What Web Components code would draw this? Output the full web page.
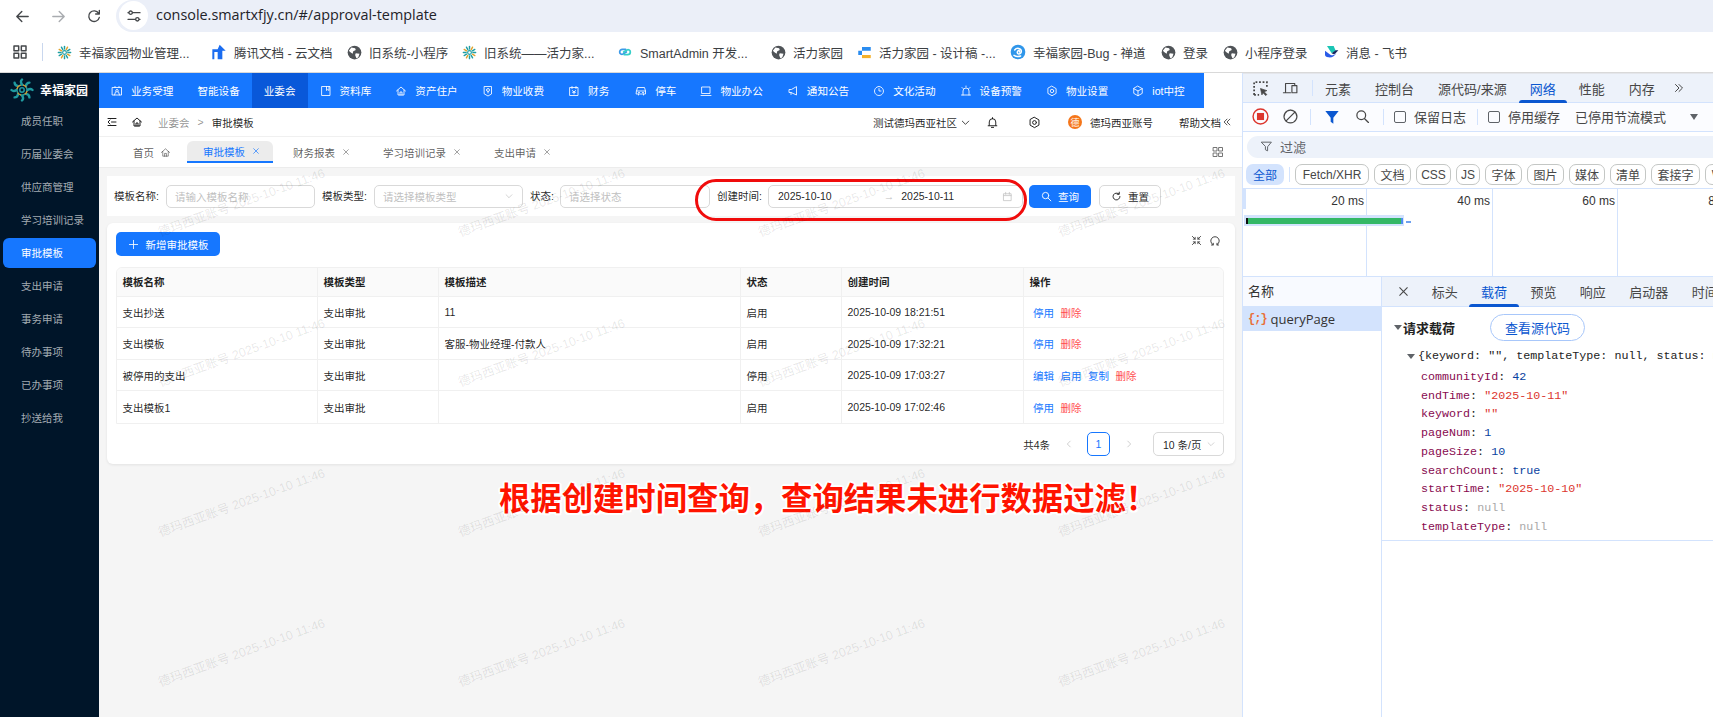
<!DOCTYPE html>
<html lang="zh-CN">
<head>
<meta charset="utf-8">
<title>approval-template</title>
<style>
  html, body { margin: 0; height: 100%; overflow: hidden; background: #fff; }
  body { font-family: "Liberation Sans", "Noto Sans CJK SC", sans-serif; width: 1713px; height: 717px; display: flex; flex-direction: column; }
  #work { flex: 1; display: flex; min-height: 0; }
</style>
</head>
<body>
<browser-bar url="console.smartxfjy.cn/#/approval-template"></browser-bar>
<bookmark-bar>
  <book-mark icon="flake" style="width:154px">幸福家园物业管理...</book-mark>
  <book-mark icon="tdoc" style="width:136px">腾讯文档 - 云文档</book-mark>
  <book-mark icon="globe" style="width:115px">旧系统-小程序</book-mark>
  <book-mark icon="flake" style="width:155px">旧系统——活力家...</book-mark>
  <book-mark icon="chain" style="width:154px">SmartAdmin 开发...</book-mark>
  <book-mark icon="globe" style="width:86px">活力家园</book-mark>
  <book-mark icon="design" style="width:153px">活力家园 - 设计稿 -...</book-mark>
  <book-mark icon="bug" style="width:151px">幸福家园-Bug - 禅道</book-mark>
  <book-mark icon="globe" style="width:62px">登录</book-mark>
  <book-mark icon="globe" style="width:100px">小程序登录</book-mark>
  <book-mark icon="feishu">消息 - 飞书</book-mark>
</bookmark-bar>
<div id="work">
  <app-sidebar>
    <side-item>成员任职</side-item>
    <side-item>历届业委会</side-item>
    <side-item>供应商管理</side-item>
    <side-item>学习培训记录</side-item>
    <side-item active>审批模板</side-item>
    <side-item>支出申请</side-item>
    <side-item>事务申请</side-item>
    <side-item>待办事项</side-item>
    <side-item>已办事项</side-item>
    <side-item>抄送给我</side-item>
  </app-sidebar>
  <app-main>
    <top-nav>
      <nav-item icon="idcard">业务受理</nav-item>
      <nav-item>智能设备</nav-item>
      <nav-item active>业委会</nav-item>
      <nav-item icon="book">资料库</nav-item>
      <nav-item icon="home">资产住户</nav-item>
      <nav-item icon="bill">物业收费</nav-item>
      <nav-item icon="money" style="padding-right:14px">财务</nav-item>
      <nav-item icon="car">停车</nav-item>
      <nav-item icon="laptop">物业办公</nav-item>
      <nav-item icon="horn">通知公告</nav-item>
      <nav-item icon="dial">文化活动</nav-item>
      <nav-item icon="alarm">设备预警</nav-item>
      <nav-item icon="gear">物业设置</nav-item>
      <nav-item icon="cube">iot中控</nav-item>
    </top-nav>
    <bread-bar></bread-bar>
    <tab-strip></tab-strip>
    <page-content>
      <filter-card></filter-card>
      <table-card></table-card>
      <call-out>根据创建时间查询，查询结果未进行数据过滤！</call-out>
      <water-mark text="德玛西亚账号 2025-10-10 11:46"></water-mark>
    </page-content>
  </app-main>
  <dev-tools></dev-tools>
</div>

<script>
const ICONS = {
  back: "M20 12H5M11 5l-7 7 7 7",
  forward: "M4 12h15M13 5l7 7-7 7",
  reload: "M19 8a8 8 0 1 0 1 6M20 3.5V9h-5.5",
  tune: "M3 7h1M10 7h11M3 17h11M20 17h1M9.5 7a2.5 2.5 0 1 1-5 0a2.5 2.5 0 1 1 5 0M19.5 17a2.5 2.5 0 1 1-5 0a2.5 2.5 0 1 1 5 0",
  grid: "M3 3h7v7H3zM14 3h7v7h-7zM3 14h7v7H3zM14 14h7v7h-7z",
  home: "M3 12l9-8 9 8M6 10v10h12V10M10 20v-6h4v6",
  menu: "M4 5h16M11 12h9M4 19h16M8 8l-4 4 4 4",
  close: "M5 5l14 14M19 5L5 19",
  chevron: "M5 9l7 7 7-7",
  left: "M15 5l-7 7 7 7",
  right: "M9 5l7 7-7 7",
  bell: "M6 17v-6a6 6 0 0 1 12 0v6M4 18h16M10 21h4M12 3v2",
  gear: "M12 2.5l8.2 4.7v9.6L12 21.5l-8.2-4.7V7.2zM15.5 12a3.5 3.5 0 1 1-7 0a3.5 3.5 0 1 1 7 0",
  search: "M15.5 15.5l6 6M17 10a7 7 0 1 1-14 0a7 7 0 1 1 14 0",
  reset: "M19.5 12a7.5 7.5 0 1 1-2.3-5.4M18 2.500V7h-4.5",
  calendar: "M4 6h16v15H4zM4 10h16M8 3v4M16 3v4",
  plus: "M12 3v18M3 12h18",
  expand: "M3 3l6 6M3 21l6-6M21 3l-6 6M21 21l-6-6M9 5v4H5M15 5v4h4M9 19v-4H5M15 19v-4h4",
  refresh: "M8 19.5a8.5 8.5 0 1 1 8 0M5 20h3.500v-3.500M19 20h-3v-3.500",
  dleft: "M12 5l-7 7 7 7M19 5l-7 7 7 7",
  dright: "M5 5l7 7-7 7M12 5l7 7-7 7",
  idcard: "M3 5h18v15H3zM8 5V3M16 5V3M12 9a2.500 2.500 0 1 1 0 5a2.500 2.500 0 1 1 0-5M7 20l2-6M17 20l-2-6",
  book: "M4 3h16v18H4zM13 3v8l2.500-2 2.500 2V3",
  bill: "M5 3h14v15l-7 4-7-4zM9 10a3 3 0 1 0 6 0a3 3 0 1 0-6 0M12 13v3",
  money: "M4 5h16v16H4zM8 3v4M16 3v4M9 11l3 3 3-3M12 14v4M9 14.500h6",
  car: "M3 12l2-7h14l2 7v6H3zM3 12h18M7 18v2M17 18v2M7 15h2M15 15h2",
  laptop: "M4 4h16v13H4zM2 21h20",
  horn: "M19 4v16L8 15H4V9h4zM8 15v4",
  dial: "M12 3a9 9 0 1 1-.1 0M12 7v5h4",
  alarm: "M6 20V12a6 6 0 0 1 12 0v8M3 20h18M4 5l2 2M20 5l-2 2M12 2v2",
  cube: "M12 2.500l8.500 4.800v9.400L12 21.500l-8.500-4.800V7.300zM3.500 7.300L12 12l8.500-4.700M12 12v9.500",
  funnel: "M3 4h18l-7 8.500V20l-4-2v-5.500z",
  device: "M5 17V5h13v2M2 18h10M14 8h7v10h-7z",
  ban: "M12 3a9 9 0 1 1-.1 0M5.500 18.500l13-13"
};

// each file-level helper returns a plain svg string so shadow markup stays short
function svg(name, size, width, extra) {
  return `<svg width="${size}" height="${size}" viewBox="0 0 24 24" fill="none" stroke="currentColor" stroke-width="${width || 2}" stroke-linecap="round" stroke-linejoin="round" style="display:block;flex:none;${extra || ""}"><path d="${ICONS[name]}"/></svg>`;
}

function flake(size) {
  let rays = "";
  for (let i = 0; i < 12; i++) {
    const color = i % 3 === 1 ? "#e0a22c" : "#1e9ea3";
    rays += `<path d="M12 6.500V2.200" stroke="${color}" stroke-width="2.300" stroke-linecap="round" transform="rotate(${i * 30} 12 12)"/>`;
  }
  return `<svg width="${size}" height="${size}" viewBox="0 0 24 24" fill="none" style="display:block;flex:none">${rays}<circle cx="12" cy="12" r="3" stroke="#1e9ea3" stroke-width="1.800"/></svg>`;
}

function logo(size) {
  let arcs = "";
  for (let i = 0; i < 8; i++) {
    arcs += `<g transform="rotate(${i * 45} 12 12)"><path d="M12 1.500c-1.500 1.500-1.500 3 0 5" stroke="#1f9aa0" stroke-width="2.400" stroke-linecap="round"/><path d="M9.500 7.500c1.500-1 3-1 4.500 0" stroke="${i % 2 ? "#d99a2b" : "#1f9aa0"}" stroke-width="1.300" stroke-linecap="round"/></g>`;
  }
  return `<svg width="${size}" height="${size}" viewBox="0 0 24 24" fill="none" style="display:block;flex:none">${arcs}<circle cx="12" cy="12" r="2.200" stroke="#1f9aa0" stroke-width="1.500"/></svg>`;
}

const FAVICONS = {
  flake: () => flake(15),
  globe: () => `<svg width="15" height="15" viewBox="0 0 24 24" style="display:block;flex:none"><circle cx="12" cy="12" r="11" fill="#4f5357"/><path d="M7 4l6 1 1 3-4 2-1 4-4-3-2-2zM14 13l6 1-2 6-3 1-2-5z" fill="#fff"/></svg>`,
  tdoc: () => `<svg width="16" height="16" viewBox="0 0 24 24" style="display:block;flex:none"><path d="M13 1l9 9h-5v13h-7V12H5v11H2V8h8z" fill="#1a6cf0"/></svg>`,
  chain: () => `<svg width="16" height="16" viewBox="0 0 24 24" fill="none" stroke-width="2.600" stroke-linecap="round" style="display:block;flex:none"><path d="M13 8H8a4 4 0 0 0-4 4c0 3 3 4 5 3l5-3" stroke="#3c9ae8"/><path d="M11 16h5a4 4 0 0 0 4-4c0-3-3-4-5-3l-5 3" stroke="#36cfc9"/></svg>`,
  design: () => `<svg width="15" height="15" viewBox="0 0 24 24" style="display:block;flex:none"><path d="M8 3h14v6H8zM2 9h6v7H2z" fill="#2a8cf0"/><path d="M8 16h14v5H8z" fill="#f5b12a"/></svg>`,
  bug: () => `<svg width="16" height="16" viewBox="0 0 24 24" fill="none" style="display:block;flex:none"><circle cx="12" cy="12" r="11" fill="#2f96ea"/><path d="M7 9c3-4 10-3 10 2s-7 5-6 1 4-2 3 0M6 17c3 2 7 2 10 1" stroke="#fff" stroke-width="2.200" stroke-linecap="round"/></svg>`,
  feishu: () => `<svg width="16" height="16" viewBox="0 0 24 24" style="display:block;flex:none"><path d="M6 3h10l3 7-6 4z" fill="#1ac5b4"/><path d="M3 10l8 6c4 2 7 0 9-3-2 5-7 8-12 7-3-.5-5-2-5-4z" fill="#2a5be8"/><path d="M13 14l5-4c1-.7 3-.8 5-.2-2 .8-3 4-5 5-2 .8-3.500 .4-5-.8z" fill="#16245e"/></svg>`
};

// small base class: set the shadow markup once
class Base extends HTMLElement {
  connectedCallback() {
    if (!this.shadowRoot) {
      this.attachShadow({ mode: "open" }).innerHTML = this.render();
    }
  }
}

class BrowserBar extends Base {
  render() {
    return `<style>
      :host { display: flex; align-items: center; height: 32px; flex: none; color: #44474a; }
      .btn { width: 36px; display: flex; justify-content: center; }
      .nav { display: flex; padding-left: 4px; width: 116px; box-sizing: border-box; }
      .pill { flex: 1; height: 32px; margin-top: -1px; background: #ebeff8; border-radius: 16px 0 0 16px; display: flex; align-items: center; padding-left: 3px; }
      .tune { width: 29px; height: 29px; border-radius: 50%; background: #fff; display: flex; align-items: center; justify-content: center; }
      .url { margin: 0 0 2px 8px; font: 14.4px "Open Sans", sans-serif; color: #1f2329; }
    </style>
    <div class="nav">
      <div class="btn">${svg("back", 17)}</div>
      <div class="btn" style="color:#a9acb0">${svg("forward", 17)}</div>
      <div class="btn">${svg("reload", 16)}</div>
    </div>
    <div class="pill">
      <div class="tune">${svg("tune", 16)}</div>
      <div class="url">${this.getAttribute("url")}</div>
    </div>`;
  }
}

class BookmarkBar extends Base {
  render() {
    return `<style>
      :host { display: flex; align-items: center; height: 41px; box-sizing: border-box; border-bottom: 1px solid #d9d9d9; flex: none; padding-left: 12px; color: #44474a; }
      .sep { width: 1px; height: 18px; background: #c9d7ee; margin: 0 14px 0 14px; }
    </style>
    ${svg("grid", 16, 2.2)}
    <div class="sep"></div>
    <slot></slot>`;
  }
}

class BookMark extends Base {
  render() {
    return `<style>
      :host { display: flex; align-items: center; gap: 7px; flex: none; font-size: 12.5px; color: #3c4043; white-space: nowrap; box-sizing: border-box; }
    </style>
    ${FAVICONS[this.getAttribute("icon")]()}<slot></slot>`;
  }
}

class AppSidebar extends Base {
  render() {
    return `<style>
      :host { display: block; width: 99px; flex: none; background: #001529; }
      .logo { height: 33px; display: flex; align-items: center; padding-left: 10px; gap: 6px; color: #fff; font-size: 12px; font-weight: 700; white-space: nowrap; }
    </style>
    <div class="logo">${logo(24)}<span>幸福家园</span></div>
    <slot></slot>`;
  }
}

class SideItem extends Base {
  render() {
    const active = this.hasAttribute("active");
    return `<style>
      :host { display: flex; align-items: center; height: 30px; box-sizing: border-box; padding: 0 0 2px 18px; margin: 0 3px 3px; border-radius: 6px; font-size: 10.5px; white-space: nowrap;
        color: ${active ? "#fff" : "rgba(255,255,255,.65)"}; background: ${active ? "#1677ff" : "none"}; }
    </style><slot></slot>`;
  }
}

class AppMain extends Base {
  render() {
    return `<style>
      :host { display: flex; flex-direction: column; width: 1143px; flex: none; background: #f5f5f5; min-height: 0; }
    </style><slot></slot>`;
  }
}

class TopNav extends Base {
  render() {
    return `<style>
      :host { display: flex; height: 35px; flex: none; background: #fff; }
      .blue { display: flex; background: #1677ff; width: 1105px; }
    </style><div class="blue"><slot></slot></div>`;
  }
}

class NavItem extends Base {
  render() {
    const icon = this.getAttribute("icon");
    return `<style>
      :host { display: flex; align-items: center; gap: 8px; padding: 0 12px; flex: none; font-size: 10.6px; color: #fff; white-space: nowrap;
        background: ${this.hasAttribute("active") ? "#0958d9" : "none"}; }
    </style>${icon ? svg(icon, 12, 1.7) : ""}<slot></slot>`;
  }
}

class BreadBar extends Base {
  render() {
    return `<style>
      :host { display: flex; align-items: center; height: 29px; flex: none; box-sizing: border-box; background: #fff; border-bottom: 1px solid #f0f0f0; font-size: 10.5px; color: rgba(0,0,0,.88); white-space: nowrap; }
      .left { display: flex; align-items: center; padding-left: 7px; flex: 1; }
      .muted { color: rgba(0,0,0,.45); }
      .sep { color: rgba(0,0,0,.45); margin: 0 8px; }
      .right { display: flex; align-items: center; }
      .avatar { width: 14px; height: 14px; border-radius: 50%; background: #f5761a; color: #fff; font-size: 9px; display: flex; align-items: center; justify-content: center; }
    </style>
    <div class="left">
      ${svg("menu", 12, 2)}
      <span style="width:13px"></span>${svg("home", 12, 2)}
      <span style="width:15px"></span><span class="muted">业委会</span><span class="sep">&gt;</span><span>审批模板</span>
    </div>
    <div class="right">
      <span>测试德玛西亚社区</span>
      ${svg("chevron", 11, 1.8, "margin:0 15px 0 3px")}
      ${svg("bell", 13, 1.8, "margin-right:29px")}
      ${svg("gear", 13, 1.8, "margin-right:27px")}
      <span class="avatar">德</span>
      <span style="margin:0 26px 0 8px">德玛西亚账号</span>
      <span>帮助文档</span>
      ${svg("dleft", 10, 1.8, "margin:0 10px 0 1px")}
    </div>`;
  }
}

class TabStrip extends Base {
  render() {
    const tabs = ["财务报表", "学习培训记录", "支出申请"];
    return `<style>
      :host { display: flex; align-items: center; height: 31px; flex: none; box-sizing: border-box; background: #fff; border-bottom: 1px solid #ececec; font-size: 10.5px; color: rgba(0,0,0,.88); white-space: nowrap; padding-left: 34px; }
      .tab { display: flex; align-items: center; gap: 6px; color: rgba(0,0,0,.65); }
      .tab svg { color: rgba(0,0,0,.55); }
      .on { height: 22px; box-sizing: border-box; margin: 0 20px 0 16px; padding: 0 16px; width: 86px; gap: 7px; background: #ececec; border-radius: 6px 6px 0 0; border-bottom: 2px solid #1677ff; color: #1677ff; }
      .on svg { color: #1677ff; }
      .gap { margin-right: 33px; gap: 7px; }
      .end { margin-left: auto; margin-right: 18px; color: #666; }
    </style>
    <div class="tab" style="gap:6px">首页 ${svg("home", 11, 1.7)}</div>
    <div class="tab on">审批模板 ${svg("close", 8, 2)}</div>
    ${tabs.map(t => `<div class="tab gap">${t} ${svg("close", 8, 2)}</div>`).join("")}
    <div class="end">${svg("grid", 12, 1.8)}</div>`;
  }
}

class PageContent extends Base {
  render() {
    return `<style>
      :host { display: block; position: relative; flex: 1; min-height: 0; padding: 8px 7px 0 8px; }
    </style><slot></slot>`;
  }
}

class FilterCard extends Base {
  render() {
    return `<style>
      :host { display: flex; align-items: center; position: relative; z-index: 2; height: 40px; box-sizing: border-box; background: #fff; padding-left: 7px; font-size: 10.5px; color: rgba(0,0,0,.88); white-space: nowrap; }
      .lab { width: 46px; margin-right: 6px; flex: none; padding-bottom: 1px; }
      .box { height: 23px; box-sizing: border-box; border: 1px solid #d9d9d9; border-radius: 5px; display: flex; align-items: center; padding: 0 8px; color: #bfbfbf; flex: none; margin-right: 7px; }
      .box svg { margin-left: auto; color: #bfbfbf; }
      .date { color: rgba(0,0,0,.88); padding: 0 9px; margin-right: 6px; }
      .btn { width: 62px; height: 23px; box-sizing: border-box; border-radius: 5px; display: flex; align-items: center; justify-content: center; gap: 6px; flex: none; }
      .pri { background: #1677ff; color: #fff; margin-right: 8px; }
      .def { border: 1px solid #d9d9d9; }
      .ring { position: absolute; left: 588px; top: 3px; width: 332px; height: 42px; box-sizing: border-box; border: 3px solid #f00c0c; border-radius: 21px; }
    </style>
    <span class="lab">模板名称:</span>
    <div class="box" style="width:149px">请输入模板名称</div>
    <span class="lab">模板类型:</span>
    <div class="box" style="width:149px">请选择模板类型${svg("chevron", 10, 1.6)}</div>
    <span class="lab" style="width:22px;margin-right:8px">状态:</span>
    <div class="box" style="width:150px">请选择状态</div>
    <span class="lab" style="width:45px">创建时间:</span>
    <div class="box date" style="width:255px"><span>2025-10-10</span><span style="margin:0 7px 0 52px;color:#bfbfbf">→</span><span>2025-10-11</span>${svg("calendar", 11, 1.6, "margin-right:0")}</div>
    <div class="btn pri">${svg("search", 11, 2)}查询</div>
    <div class="btn def">${svg("reset", 11, 2)}重置</div>
    <div class="ring"></div>`;
  }
}

class TableCard extends Base {
  render() {
    const rows = [
      ["支出抄送", "支出审批", "11", "启用", "2025-10-09 18:21:51", ["停用", "删除"], 31],
      ["支出模板", "支出审批", "客服-物业经理-付款人", "启用", "2025-10-09 17:32:21", ["停用", "删除"], 32],
      ["被停用的支出", "支出审批", "", "停用", "2025-10-09 17:03:27", ["编辑", "启用", "复制", "删除"], 31],
      ["支出模板1", "支出审批", "", "启用", "2025-10-09 17:02:46", ["停用", "删除"], 32]
    ];
    const body = rows.map(r => `<tr style="height:${r[6]}px">
      ${r.slice(0, 5).map(c => `<td>${c}</td>`).join("")}
      <td class="ops">${r[5].map(a => `<a class="${a === "删除" ? "del" : ""}">${a}</a>`).join("")}</td></tr>`).join("");
    return `<style>
      :host { display: block; margin-top: 7px; height: 241px; box-sizing: border-box; background: #fff; border-radius: 6px; box-shadow: 0 1px 3px rgba(0,0,0,.08); padding: 9px 10px 0 9px; font-size: 10.5px; color: rgba(0,0,0,.88); white-space: nowrap; }
      .top { display: flex; align-items: center; height: 24px; margin-bottom: 11px; }
      .add { width: 104px; height: 24px; background: #1677ff; color: #fff; border-radius: 5px; display: flex; align-items: center; justify-content: center; gap: 7px; }
      .tools { margin-left: auto; display: flex; gap: 7px; margin-right: 4px; margin-top: -6px; color: #444; }
      table { width: 1108px; table-layout: fixed; border-collapse: separate; border-spacing: 0; border: 1px solid #f0f0f0; border-radius: 6px 6px 0 0; }
      th, td { text-align: left; padding: 0 5.5px; border-bottom: 1px solid #f0f0f0; border-right: 1px solid #f0f0f0; font-weight: 400; }
      th { background: #fafafa; font-weight: 700; height: 26px; padding-bottom: 2px; }
      th:first-child { border-top-left-radius: 6px; }
      th:last-child { border-top-right-radius: 6px; }
      th:last-child, td:last-child { border-right: 0; }
      tr:last-child td { border-bottom: 0; }
      .ops { padding-left: 9px; }
      a { color: #1677ff; margin-right: 6.5px; }
      a.del { color: #ff4d4f; }
      .pager { display: flex; align-items: center; justify-content: flex-end; height: 24px; margin-top: 8px; width: 1108px; }
      .page { width: 23px; height: 24px; box-sizing: border-box; border: 1px solid #1677ff; border-radius: 5px; color: #1677ff; display: flex; align-items: center; justify-content: center; margin: 0 14px 0 13px; }
      .size { width: 71px; height: 24px; box-sizing: border-box; border: 1px solid #d9d9d9; border-radius: 5px; display: flex; align-items: center; padding: 0 7px 0 9px; justify-content: space-between; margin-left: 19px; }
      .dim { color: #bfbfbf; }
    </style>
    <div class="top">
      <div class="add">${svg("plus", 11, 1.8)}新增审批模板</div>
      <div class="tools">${svg("expand", 11, 2)}${svg("refresh", 12, 2)}</div>
    </div>
    <table>
      <colgroup><col style="width:201px"><col style="width:121px"><col style="width:302px"><col style="width:101px"><col style="width:182px"><col></colgroup>
      <tr><th>模板名称</th><th>模板类型</th><th>模板描述</th><th>状态</th><th>创建时间</th><th>操作</th></tr>
      ${body}
    </table>
    <div class="pager">
      <span style="margin-right:14px">共4条</span>
      <span class="dim">${svg("left", 10, 1.8)}</span>
      <div class="page">1</div>
      <span class="dim">${svg("right", 10, 1.8)}</span>
      <div class="size">10 条/页<span class="dim">${svg("chevron", 10, 1.6)}</span></div>
    </div>`;
  }
}

class CallOut extends Base {
  render() {
    return `<style>
      :host { position: absolute; left: 400px; top: 311px; z-index: 3; white-space: nowrap; font: 700 31.35px/36px "Noto Sans CJK SC", sans-serif; color: #ff1400;
        text-shadow: 2px 0 #fff, -2px 0 #fff, 0 2px #fff, 0 -2px #fff, 1.5px 1.5px #fff, -1.5px 1.5px #fff, 1.5px -1.5px #fff, -1.5px -1.5px #fff; }
    </style><slot></slot>`;
  }
}

class WaterMark extends Base {
  render() {
    const text = this.getAttribute("text");
    return `<style>
      :host { position: absolute; inset: -10px 0 0 0; overflow: hidden; z-index: 4; pointer-events: none; }
      .tiles { display: grid; grid-template-columns: repeat(4, 300px); grid-auto-rows: 150px; margin: -32px 0 0 -8px; }
      .tiles div { display: flex; align-items: center; justify-content: center; }
      span { font: 12.5px "Liberation Sans", "Noto Sans CJK SC", sans-serif; color: rgba(0,0,0,.1); white-space: nowrap; transform: rotate(-20deg); }
    </style>
    <div class="tiles">${`<div><span>${text}</span></div>`.repeat(16)}</div>`;
  }
}

class DevTools extends Base {
  render() {
    const chips = [["Fetch/XHR", 74], ["文档", 37], ["CSS", 35], ["JS", 24], ["字体", 37], ["图片", 37], ["媒体", 36], ["清单", 36], ["套接字", 49], ["WebAssembly", 90]];
    const props = [
      ["communityId", "42", "num"], ["endTime", "\"2025-10-11\"", "str"], ["keyword", "\"\"", "str"],
      ["pageNum", "1", "num"], ["pageSize", "10", "num"], ["searchCount", "true", "num"],
      ["startTime", "\"2025-10-10\"", "str"], ["status", "null", "nil"], ["templateType", "null", "nil"]
    ];
    return `<style>
      :host { display: flex; flex-direction: column; width: 471px; flex: none; overflow: hidden; box-sizing: border-box; border-left: 1px solid #d3e3fd; background: #fff; font-size: 13px; color: #474747; white-space: nowrap; }
      .tabs { display: flex; align-items: stretch; height: 30px; background: #edf2fa; flex: none; border-bottom: 1px solid #d3e3fd; box-sizing: border-box; }
      .tabs span { display: flex; align-items: center; position: relative; }
      .main span { padding: 0 12px; }
      .on { color: #0b57d0; }
      .on::after { content: ""; position: absolute; left: 0; right: 0; bottom: -1px; height: 3px; background: #0b57d0; border-radius: 3px 3px 0 0; }
      .tool { display: flex; align-items: center; height: 29px; padding-bottom: 1px; border-bottom: 1px solid #d3e3fd; box-sizing: border-box; flex: none; background: #fbfcff; }
      .sep { width: 1px; height: 16px; background: #d3e3fd; flex: none; }
      .chk { width: 12px; height: 12px; box-sizing: border-box; border: 1px solid #5f6368; border-radius: 2px; flex: none; }
      .filter { margin: 4px 0 0 4px; height: 22px; padding-bottom: 1px; box-sizing: border-box; border-radius: 11px 0 0 11px; background: #edf2fa; display: flex; align-items: center; padding-left: 13px; gap: 7px; flex: none; color: #5f6368; }
      .chips { display: flex; align-items: center; height: 21px; margin: 6px 0 3px 3px; flex: none; gap: 5px; font-size: 12px; }
      .chips b { font-weight: 400; height: 21px; box-sizing: border-box; display: flex; align-items: center; justify-content: center; flex: none; border: 1px solid #c4c7c5; border-radius: 7px; }
      .chips b.all { background: #d3e3fd; border: 0; padding: 0 7px; color: #0b57d0; }
      .over { height: 89px; flex: none; box-sizing: border-box; border-top: 1px solid #d3e3fd; border-bottom: 1px solid #d3e3fd; position: relative; display: flex; font-size: 12px; color: #333; }
      .over .col { flex: none; width: 125px; box-sizing: border-box; border-right: 1px solid #d3e3fd; text-align: right; padding: 5px 2px 0 0; }
      .handle { position: absolute; left: 0; top: 0; width: 3px; height: 20px; background: #d3e3fd; }
      .wave { position: absolute; left: 1px; top: 26px; width: 160px; height: 11px; background: #d3e3fd; }
      .bar { position: absolute; left: 3px; top: 29px; width: 157px; height: 6px; background: #34b866; border-left: 2px solid #111; box-sizing: border-box; border-right: 2px solid #4d8df0; }
      .tail { position: absolute; left: 163px; top: 32px; width: 5px; height: 2px; background: #6ea0ef; }
      .lower { flex: 1; display: flex; min-height: 0; }
      .names { width: 139px; flex: none; border-right: 1px solid #d3e3fd; box-sizing: border-box; }
      .names .head { height: 30px; padding-bottom: 2px; background: #f8faff; display: flex; align-items: center; padding-left: 5px; color: #333; border-bottom: 1px solid #d3e3fd; box-sizing: border-box; }
      .names .sel { height: 24px; padding-bottom: 1px; box-sizing: border-box; background: #d3e3fd; display: flex; align-items: center; padding-left: 5px; gap: 4px; color: #333; font-family: "Open Sans", "Liberation Sans", sans-serif; }
      .brace { color: #e8703a; font: 700 12px "Liberation Mono", monospace; letter-spacing: -1px; }
      .detail { flex: 1; min-width: 0; }
      .detail .tabs span { padding: 0 11.7px; }
      .pay { height: 234px; box-sizing: border-box; border-bottom: 1px solid #d3e3fd; padding-top: 7px; }
      .title { display: flex; align-items: center; height: 27px; padding-left: 12px; font-weight: 700; color: #222; }
      .tri { width: 0; height: 0; border: 4px solid transparent; border-top: 5px solid #5f6368; border-bottom: 0; margin-right: 1px; flex: none; }
      .src { margin-left: 35px; height: 27px; box-sizing: border-box; width: 95px; border: 1px solid #a8c7fa; border-radius: 14px; display: flex; align-items: center; justify-content: center; font-weight: 400; color: #0b57d0; }
      .code { font: 11.7px/18.75px "Liberation Mono", monospace; color: #222; padding-left: 24px; margin-top: 6px; }
      .line { display: flex; align-items: center; margin-left: 15px; }
      .key { color: #880a4f; }
      .num { color: #0842a0; }
      .str { color: #dc362e; }
      .nil { color: #a9a9a9; }
    </style>
    <div class="tabs main" style="border-top:1px solid #e4e6eb">
      <div style="display:flex;align-items:center;gap:13px;padding:0 12px 0 9px;color:#474747">
        <svg width="17" height="17" viewBox="0 0 24 24" fill="none" stroke="currentColor" style="display:block;flex:none"><path d="M3 21V3h18v9M3 21h7" stroke-width="2.500" stroke-dasharray="2.500 2.500"/><path d="M12 12l9 3-4 1.500 4 4-1.500 1.500-4-4L14 21z" fill="currentColor" stroke-width="1"/></svg>
        ${svg("device", 17, 1.6)}<div class="sep"></div>
      </div>
      <span style="padding-left:0">元素</span><span>控制台</span><span>源代码/来源</span>
      <span class="on" style="margin:0;padding:0 11px">网络</span><span>性能</span><span>内存</span>
      <span style="padding:0 0 0 6px">${svg("dright", 12, 2)}</span>
    </div>
    <div class="tool">
      <svg width="17" height="17" viewBox="0 0 24 24" style="margin-left:9px;flex:none"><circle cx="12" cy="12" r="10.5" fill="none" stroke="#dc362e" stroke-width="2"/><rect x="7" y="7" width="10" height="10" fill="#dc362e"/></svg>
      <span style="width:13px"></span>${svg("ban", 17, 1.8)}
      <span style="width:11px"></span><div class="sep"></div>
      <span style="width:13px"></span><svg width="16" height="16" viewBox="0 0 24 24" style="flex:none"><path d="M2 3h20l-8 10v9l-4-3v-6z" fill="#0b57d0"/></svg>
      <span style="width:15px"></span>${svg("search", 15, 2)}
      <span style="width:13px"></span><div class="sep"></div>
      <span style="width:10px"></span><div class="chk"></div>
      <span style="width:8px"></span><span>保留日志</span>
      <span style="width:11px"></span><div class="sep"></div>
      <span style="width:10px"></span><div class="chk"></div>
      <span style="width:8px"></span><span>停用缓存</span>
      <span style="width:15px"></span><span>已停用节流模式</span>
      <span style="width:24px"></span><div class="tri" style="border-width:6px 4px 0;border-top-color:#5f6368"></div>
    </div>
    <div class="filter">${svg("funnel", 13, 1.8)}<span>过滤</span></div>
    <div class="chips"><b class="all">全部</b><div class="sep" style="height:15px"></div>${chips.map(c => `<b style="width:${c[1]}px">${c[0]}</b>`).join("")}</div>
    <div class="over">
      <div class="col" style="width:124px">20 ms</div><div class="col" style="width:126px">40 ms</div><div class="col">60 ms</div><div class="col" style="border:0">80 ms</div>
      <div class="handle"></div><div class="wave"></div><div class="bar"></div><div class="tail"></div>
    </div>
    <div class="lower">
      <div class="names">
        <div class="head">名称</div>
        <div class="sel"><span class="brace">{;}</span>queryPage</div>
      </div>
      <div class="detail">
        <div class="tabs" style="background:#edf2fa">
          <span style="padding:0 10px 0 15px">${svg("close", 13, 2)}</span>
          <span>标头</span><span class="on">载荷</span><span>预览</span><span>响应</span><span>启动器</span><span>时间</span>
        </div>
        <div class="pay">
          <div class="title"><div class="tri"></div>请求载荷<div class="src">查看源代码</div></div>
          <div class="code">
            <div class="line" style="margin:0 0 2px"><div class="tri" style="margin:0 3px 0 1px;border-width:5px 4px 0"></div>{keyword: "", templateType: null, status: null, endTime: ""}</div>
            ${props.map(p => `<div class="line"><span class="key">${p[0]}</span>:&nbsp;<span class="${p[2]}">${p[1]}</span></div>`).join("")}
          </div>
        </div>
      </div>
    </div>`;
  }
}

customElements.define("browser-bar", BrowserBar);
customElements.define("bookmark-bar", BookmarkBar);
customElements.define("book-mark", BookMark);
customElements.define("app-sidebar", AppSidebar);
customElements.define("side-item", SideItem);
customElements.define("app-main", AppMain);
customElements.define("top-nav", TopNav);
customElements.define("nav-item", NavItem);
customElements.define("bread-bar", BreadBar);
customElements.define("tab-strip", TabStrip);
customElements.define("page-content", PageContent);
customElements.define("filter-card", FilterCard);
customElements.define("table-card", TableCard);
customElements.define("call-out", CallOut);
customElements.define("water-mark", WaterMark);
customElements.define("dev-tools", DevTools);
</script>
</body>
</html>
